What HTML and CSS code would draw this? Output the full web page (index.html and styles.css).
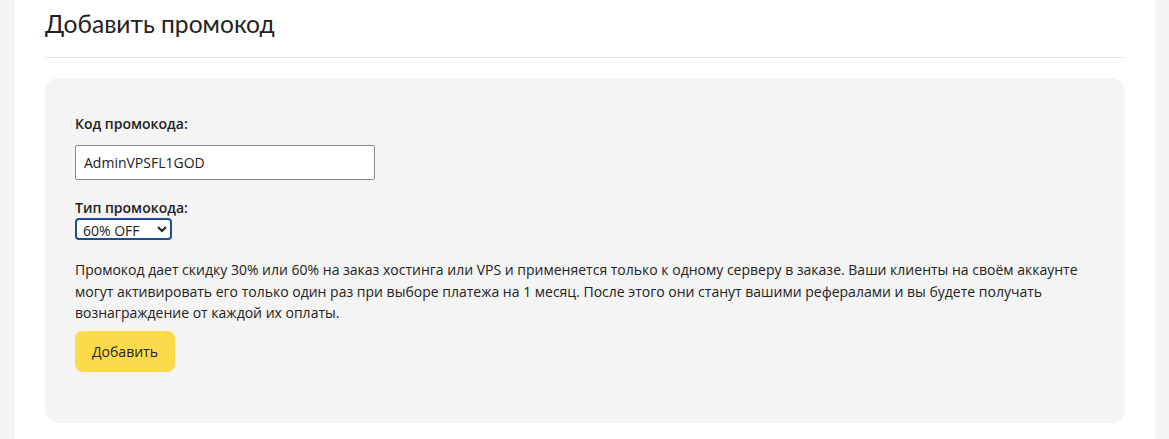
FILE: index.html
```html
<!DOCTYPE html>
<html lang="ru">
<head>
  <meta charset="UTF-8" />
  <meta name="viewport" content="width=device-width, initial-scale=1.0" />
  <title>Добавить промокод</title>
  <link rel="stylesheet" href="styles.css">
</head>
<body>
  <div class="page">
    <h2 class="title">Добавить промокод</h2>
    <form class="promo-box" onsubmit="return false">
      <label class="field">
        <span class="field-label">Код промокода:</span>
        <input class="code-input" type="text" value="AdminVPSFL1GOD" />
      </label>

      <label class="field">
        <span class="field-label plain">Тип промокода:</span>
        <select class="type-select">
          <option>30% OFF</option>
          <option selected>60% OFF</option>
        </select>
      </label>

      <p class="note">Промокод дает скидку 30% или 60% на заказ хостинга или VPS и применяется только к одному серверу в заказе. Ваши клиенты на своём аккаунте могут активировать его только один раз при выборе платежа на 1 месяц. После этого они станут вашими рефералами и вы будете получать вознаграждение от каждой их оплаты.</p>

      <button class="add-btn" type="submit">Добавить</button>
    </form>
  </div>
</body>
</html>
```

FILE: styles.css
```css
html, body {
  margin: 0;
  height: 100%;
}
body {
  font-family: "Open Sans", "Liberation Sans", sans-serif;
  background: #f5f4f2;
  color: #222;
  padding: 0 14px 0 15px;
}
.page {
  background: #ffffff;
  min-height: 100%;
  padding: 0 30px;
}
.title {
  margin: 0;
  padding: 8px 0 17px;
  font-family: "Lato", "Open Sans", sans-serif;
  font-weight: 400;
  font-size: 24.6px;
  line-height: 32px;
  color: #222;
  border-bottom: 1px solid #e8e8e8;
}
.promo-box {
  margin-top: 20px;
  background: #f4f4f4;
  border-radius: 14px;
  padding: 36px 30px 51px;
  font-size: 14px;
}
.field {
  display: block;
  margin-bottom: 18px;
}
.field-label {
  display: block;
  font-weight: 600;
  line-height: 20px;
  margin-bottom: 11px;
}
.field-label.plain {
  margin-bottom: 0;
}
.code-input {
  box-sizing: border-box;
  width: 300px;
  height: 35px;
  padding: 0 8px;
  border: 1px solid #8a8a8a;
  border-radius: 2px;
  background: #fff;
  font-family: inherit;
  font-size: 14px;
  color: #222;
}
.type-select {
  box-sizing: border-box;
  width: 97px;
  height: 22px;
  border: 2px solid #1f4f8f;
  border-radius: 4px;
  background: #fff;
  font-family: inherit;
  font-size: 14px;
  color: #222;
  padding: 0 2px;
}
.note {
  margin: 19px 0 7px;
  line-height: 21.5px;
  max-width: 1020px;
}
.add-btn {
  width: 100px;
  height: 41px;
  background: #fcdb4b;
  border: none;
  border-radius: 8px;
  font-family: inherit;
  font-size: 14px;
  color: #222;
  cursor: pointer;
}
```
